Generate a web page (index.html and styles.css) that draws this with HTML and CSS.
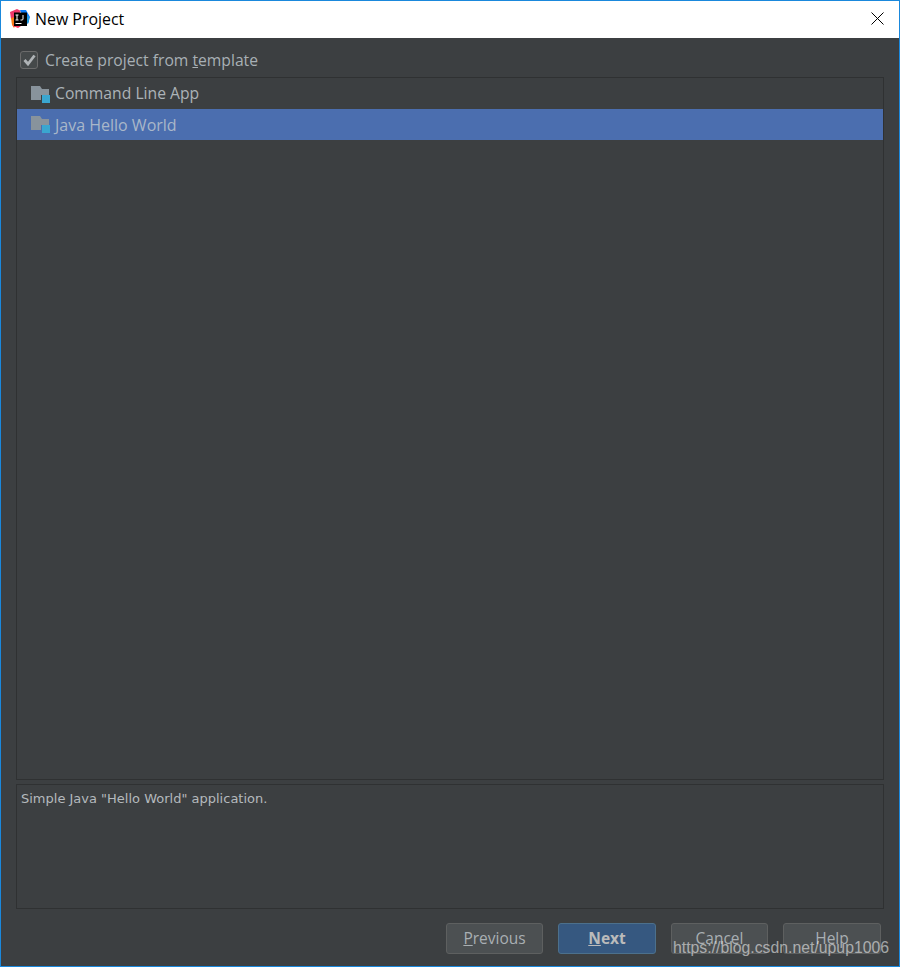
FILE: index.html
```html
<!DOCTYPE html>
<html lang="en">
<head>
<meta charset="utf-8">
<title>New Project</title>
<link rel="stylesheet" href="styles.css">
</head>
<body>
<div class="window">
  <header class="titlebar">
    <svg class="app-logo" width="20" height="20" viewBox="0 0 20 20">
      <path d="M0 3 L7 0 L11 2 L4 11 L1 10 Z" fill="#f0386b"/>
      <path d="M1 9 L5 8 L6 15 L4 19 L2 16 Z" fill="#f97a12"/>
      <path d="M10 1 L16 1 L20 8 L18 15 L15 12 Z" fill="#087cfa"/>
      <path d="M3 17 L8 19 L11 17 L5 13 Z" fill="#fe315d"/>
      <path d="M15 16 L19 13 L19 7 L15 8 Z" fill="#1f9be0"/>
      <rect x="4" y="3.500" width="13" height="13.500" fill="#000"/>
      <rect x="5.500" y="14" width="6" height="1" fill="#fff"/>
      <path d="M5.500 6h3M7 6v5M5.500 11h3M13 6v4q0 1-1 1h-1.500" fill="none" stroke="#fff" stroke-width="1"/>
    </svg>
    <span class="title">New Project</span>
    <svg class="close" width="13" height="13" viewBox="0 0 13 13"><path d="M.5.500l12 12M12.500.500l-12 12" stroke="#000" stroke-width="1" fill="none"/></svg>
  </header>
  <main class="body">
    <label class="template-check">
      <span class="checkbox">
        <svg width="13" height="12" viewBox="0 0 13 12"><path d="M1.500 6 L5 10 L11.500 1.500" fill="none" stroke="#afb3b6" stroke-width="2.800"/></svg>
      </span>
      <span>Create project from <u>t</u>emplate</span>
    </label>
    <ul class="list">
      <li class="row">
        <svg class="folder" width="19" height="17" viewBox="0 0 19 17"><path d="M0 0h9l2 3h7v6h-8v5H0z" fill="#88939c"/><rect x="11" y="9" width="8" height="8" fill="#3aa6d0"/></svg>
        <span>Command Line App</span>
      </li>
      <li class="row selected">
        <svg class="folder" width="19" height="17" viewBox="0 0 19 17"><path d="M0 0h9l2 3h7v6h-8v5H0z" fill="#88939c"/><rect x="11" y="9" width="8" height="8" fill="#3aa6d0"/></svg>
        <span>Java Hello World</span>
      </li>
    </ul>
    <div class="description">Simple Java "Hello World" application.</div>
    <footer class="buttons">
      <button class="btn"><u>P</u>revious</button>
      <button class="btn wide primary"><u>N</u>ext</button>
      <button class="btn">Cancel</button>
      <button class="btn wide">Help</button>
    </footer>
  </main>
  <div class="watermark">https://blog.csdn.net/upup1006</div>
</div>
</body>
</html>
```
FILE: styles.css
```css
* { box-sizing: border-box; }
html, body { margin: 0; padding: 0; }
body { width: 900px; height: 967px; overflow: hidden; font-family: "Open Sans", "Noto Sans", sans-serif; }
.window { position: relative; width: 900px; height: 967px; border: 1px solid #1a88dc; display: flex; flex-direction: column; background: #3c3f41; }
.titlebar { height: 37px; background: #fff; display: flex; align-items: center; padding: 0 15px 2px 9px; flex: none; }
.app-logo { flex: none; margin-right: 5px; }
.title { font-size: 15.9px; color: #000; flex: 1; }
.close { flex: none; }
.body { flex: 1; display: flex; flex-direction: column; padding: 12px 15px; min-height: 0; }
.template-check { display: flex; align-items: center; gap: 7px; height: 20px; margin-left: 4px; font-size: 15.7px; color: #a8b0b5; margin-bottom: 7px; }
.checkbox { width: 18px; height: 18px; border: 1px solid #6b6b6b; border-radius: 3px; background: #45494a; display: flex; align-items: center; justify-content: center; flex: none; }
.list { list-style: none; margin: 0; padding: 0; height: 703px; border: 1px solid #2f3132; flex: none; }
.row { height: 31px; display: flex; align-items: center; gap: 5px; padding-left: 14px; padding-bottom: 1px; font-size: 15.7px; color: #acb3b8; }
.folder { margin-top: 3px; flex: none; }
.row.selected { background: #4b6eaf; color: #a9b7c9; padding-bottom: 0; font-size: 16px; }
.row.selected .folder { margin-top: 0; }
.description { height: 125px; margin-top: 4px; border: 1px solid #2f3132; padding: 6px 4px; font-family: "DejaVu Sans", sans-serif; font-size: 13px; color: #b4b9bd; flex: none; }
.buttons { display: flex; justify-content: flex-end; gap: 15px; margin-top: 14px; padding-right: 3px; }
.btn { width: 97px; height: 31px; border: 1px solid #5e6060; border-radius: 3px; background: #4c5052; color: #a9afb3; font-family: inherit; font-size: 15.5px; line-height: 26px; padding: 0 0 2px; }
.btn.wide { width: 98px; }
.btn.primary { background: #365880; border-color: #4c708c; color: #bbbbbb; font-weight: 700; }
.watermark { position: absolute; left: 672px; top: 938px; font-family: "Liberation Sans", sans-serif; font-size: 15.8px; line-height: 18px; color: rgba(255,255,255,.55); }
```
